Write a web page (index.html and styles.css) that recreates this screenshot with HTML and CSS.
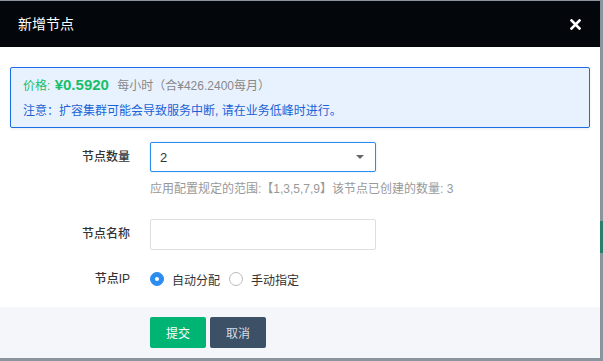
FILE: index.html
```
<!DOCTYPE html>
<html lang="zh-CN">
<head>
    <meta charset="UTF-8">
    <title>新增节点</title>
    <link rel="stylesheet" href="styles.css">
</head>
<body>

<div class="page">
    <div class="dialog">
        <div class="dialog-header">
            <span class="dialog-title">新增节点</span>
            <span class="dialog-close">
                <svg width="11" height="11" viewBox="0 0 11 11">
                    <path d="M1.5 1.5 L9.5 9.5 M9.5 1.5 L1.5 9.5" stroke="#fff" stroke-width="2.6" stroke-linecap="square"/>
                </svg>
            </span>
        </div>

        <div class="dialog-body">
            <div class="alert">
                <div class="alert-line">
                    <span class="price-label">价格:</span>
                    <span class="price-value">¥0.5920</span>
                    <span class="price-note">每小时（合¥426.2400每月）</span>
                </div>
                <div class="alert-line alert-warn">注意：扩容集群可能会导致服务中断, 请在业务低峰时进行。</div>
            </div>

            <div class="form-row row-count">
                <label class="form-label">节点数量</label>
                <div class="form-ctrl">
                    <div class="select is-focus">
                        <span>2</span>
                        <i class="select-arrow"></i>
                    </div>
                    <p class="form-hint">应用配置规定的范围:【1,3,5,7,9】该节点已创建的数量: 3</p>
                </div>
            </div>

            <div class="form-row row-name">
                <label class="form-label">节点名称</label>
                <div class="form-ctrl">
                    <div class="input"></div>
                </div>
            </div>

            <div class="form-row row-ip">
                <label class="form-label">节点IP</label>
                <div class="form-ctrl radios">
                    <span class="radio checked"><i></i>自动分配</span>
                    <span class="radio"><i></i>手动指定</span>
                </div>
            </div>
        </div>

        <div class="dialog-footer">
            <button class="btn btn-primary">提交</button>
            <button class="btn btn-cancel">取消</button>
        </div>
    </div>
    <div class="side">
        <div class="side-mark"></div>
    </div>
</div>

</body>
</html>
```

FILE: styles.css
```
* {
    box-sizing: border-box;
}

html, body {
    margin: 0;
    padding: 0;
    height: 100%;
}

body {
    background: #8b939c;
    font-family: "Liberation Sans", "Noto Sans CJK SC", sans-serif;
    font-size: 12px;
    color: #333;
    overflow: hidden;
}

p {
    margin: 0;
}

.page {
    display: flex;
    padding-top: 1px;
}

.dialog {
    width: 600px;
    height: 357px;
    background: #fff;
    display: flex;
    flex-direction: column;
}

.dialog-header {
    height: 46px;
    background: #03070b;
    display: flex;
    align-items: center;
    justify-content: space-between;
    padding: 0 18px 0 18px;
}

.dialog-title {
    color: #fff;
    font-size: 14px;
    line-height: 20px;
}

.dialog-close {
    display: flex;
    margin-right: 1px;
}

.dialog-body {
    flex: 1;
    padding: 20px 10px 0 10px;
}

.alert {
    height: 61px;
    border: 1px solid #1b6de6;
    border-radius: 2px;
    background: #e8f2fe;
    padding: 4px 12px 0 12px;
    box-shadow: 0 1px 3px rgba(0, 0, 0, .08);
}

.alert-line {
    height: 26px;
    line-height: 26px;
    white-space: nowrap;
}

.price-label {
    color: #19be6b;
    font-size: 12px;
}

.price-value {
    color: #19be6b;
    font-size: 15px;
    font-weight: 700;
    margin: 0 5px 0 1px;
}

.price-note {
    color: #888;
    font-size: 12px;
}

.alert-warn {
    color: #1a62d6;
    font-size: 12px;
}

.form-row {
    display: flex;
    align-items: flex-start;
}

.form-label {
    width: 140px;
    padding-right: 20px;
    text-align: right;
    font-size: 12px;
    font-weight: 500;
    color: #333;
    line-height: 30px;
    flex-shrink: 0;
}

.form-ctrl {
    flex: 1;
}

.row-count {
    margin-top: 14px;
}

.select, .input {
    width: 226px;
    height: 31px;
    border: 1px solid #dcdee2;
    border-radius: 2px;
    background: #fff;
}

.select {
    height: 30px;
    display: flex;
    align-items: center;
    justify-content: space-between;
    padding: 0 10px 0 9px;
    font-size: 13px;
    color: #333;
}

.select.is-focus {
    border-color: #2d8cf0;
    box-shadow: 0 0 2px rgba(45, 140, 240, .3);
}

.select-arrow {
    width: 0;
    height: 0;
    border-left: 4px solid transparent;
    border-right: 4px solid transparent;
    border-top: 4px solid #666;
    margin-right: 1px;
}

.form-hint {
    color: #999;
    font-size: 12px;
    line-height: 18px;
    margin-top: 8px;
}

.row-name {
    margin-top: 21px;
}

.row-ip {
    margin-top: 14px;
}

.radios {
    display: flex;
    align-items: center;
    height: 30px;
}

.radio {
    display: inline-flex;
    align-items: center;
    font-size: 12px;
    color: #333;
    margin-right: 9px;
}

.radio i {
    width: 14px;
    height: 14px;
    border-radius: 50%;
    border: 1px solid #bbb;
    background: #fff;
    margin-right: 8px;
    display: inline-flex;
    align-items: center;
    justify-content: center;
}

.radio.checked i {
    border-color: #2d8cf0;
    background: #2d8cf0;
}

.radio.checked i::after {
    content: "";
    width: 4px;
    height: 4px;
    border-radius: 50%;
    background: #fff;
}

.dialog-footer {
    height: 51px;
    background: #f5f6fa;
    display: flex;
    align-items: center;
    padding-left: 150px;
    gap: 4px;
}

.btn {
    width: 56px;
    height: 31px;
    border: none;
    border-radius: 2px;
    font-family: "Noto Sans CJK SC", sans-serif;
    font-size: 12px;
    cursor: pointer;
}

.btn-primary {
    background: #00b574;
    color: #fff;
}

.btn-cancel {
    background: #3c5066;
    color: #d7dde4;
}

.side {
    flex: 1;
    height: 360px;
    position: relative;
}

.side-mark {
    position: absolute;
    top: 220px;
    left: 0;
    width: 100%;
    height: 32px;
    background: #2b7d6c;
}
```
